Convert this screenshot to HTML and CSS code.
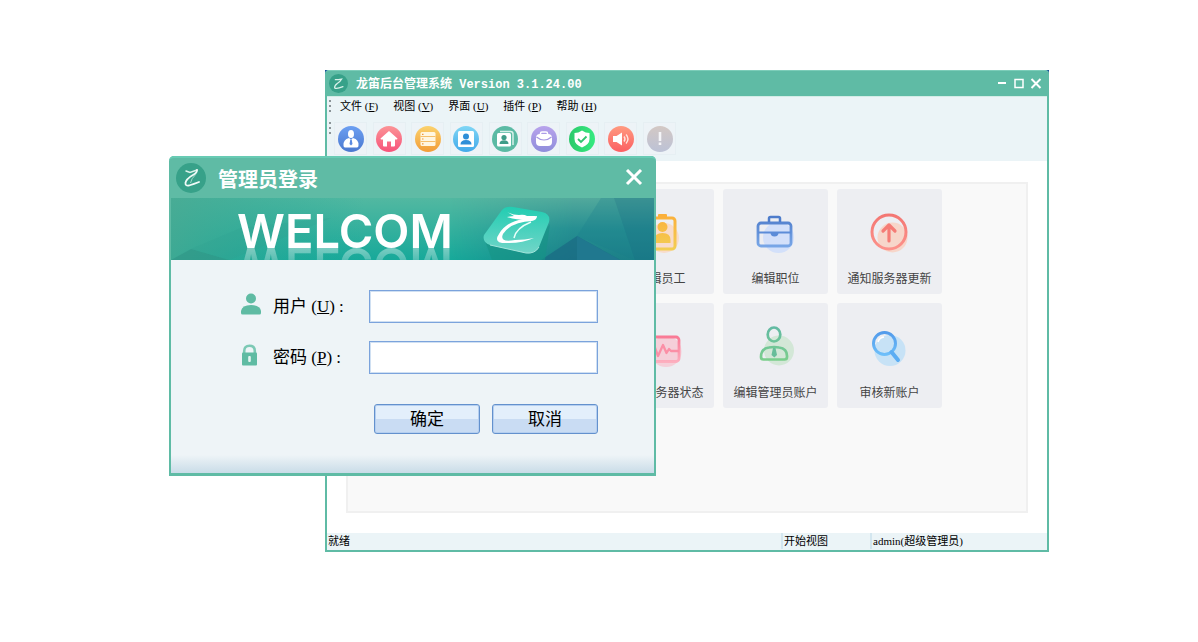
FILE: index.html
```html
<!DOCTYPE html>
<html lang="zh-CN">
<head>
    <meta charset="UTF-8">
    <meta name="viewport" content="width=device-width, initial-scale=1.0">
    <title>龙笛后台管理系统</title>
    <link rel="stylesheet" href="styles.css">
</head>
<body>

<div class="desktop">

    <!-- Main window -->
    <div class="main-window">
        <header class="titlebar">
            <svg class="titlebar-logo" viewBox="0 0 30 30">
                <circle cx="15" cy="15" r="15" fill="#37a189"/>
                <path d="M10 9Q15 9 20 8Q18 12 13 15Q8 19 9 22Q12 24 22 20" fill="none" stroke="#d9f1ea" stroke-width="2" stroke-linecap="round"/>
            </svg>
            <h1>龙笛后台管理系统 Version 3.1.24.00</h1>
            <div class="window-buttons">
                <button type="button" aria-label="最小化"><svg viewBox="0 0 12 12"><path d="M2 5h8" stroke="#fff" stroke-width="2"/></svg></button>
                <button type="button" aria-label="最大化"><svg viewBox="0 0 12 12"><rect x="2" y="1.500" width="8" height="8" fill="none" stroke="#fff" stroke-width="1.500"/></svg></button>
                <button type="button" aria-label="关闭"><svg viewBox="0 0 12 12"><path d="M1.500 1l9 9M10.500 1l-9 9" stroke="#fff" stroke-width="2"/></svg></button>
            </div>
        </header>

        <div class="window-body">
            <div class="bars">
                <nav class="menubar">
                    <span class="grip"></span>
                    <button type="button">文件 (<u>F</u>)</button>
                    <button type="button">视图 (<u>V</u>)</button>
                    <button type="button">界面 (<u>U</u>)</button>
                    <button type="button">插件 (<u>P</u>)</button>
                    <button type="button">帮助 (<u>H</u>)</button>
                </nav>
                <div class="toolbar">
                    <span class="grip"></span>
                    <div class="tools">
                        <button type="button" aria-label="管理员">
                            <svg viewBox="0 0 26 26">
                                <defs><linearGradient id="t1" x2="0" y2="1"><stop stop-color="#6c9ff2"/><stop offset="1" stop-color="#4a78cf"/></linearGradient></defs>
                                <circle cx="13" cy="13" r="13" fill="url(#t1)"/>
                                <ellipse cx="13" cy="8" rx="3" ry="4" fill="#fff"/>
                                <path d="M5.500 19.500Q5 13.500 11 12L13 13.500L15 12Q21 13.500 20.500 19.500Q20.500 21.500 19 21.500H7Q5.500 21.500 5.500 19.500Z" fill="#fff"/>
                                <path d="M12.300 13.500h1.400l.8 4.500-1.500 1.500-1.500-1.500z" fill="#5b8ae0"/>
                            </svg>
                        </button>
                        <button type="button" aria-label="主页">
                            <svg viewBox="0 0 26 26">
                                <defs><linearGradient id="t2" x2="0" y2="1"><stop stop-color="#fb9396"/><stop offset="1" stop-color="#f7537a"/></linearGradient></defs>
                                <circle cx="13" cy="13" r="13" fill="url(#t2)"/>
                                <path d="M13 5L4.500 12.500Q4.500 13.500 5.500 13.500H7V19.500Q7 20.500 8 20.500H11V15.500H15V20.500H18Q19 20.500 19 19.500V13.500H20.500Q21.500 13.500 21.500 12.500Z" fill="#fff"/>
                            </svg>
                        </button>
                        <button type="button" aria-label="列表">
                            <svg viewBox="0 0 26 26">
                                <defs><linearGradient id="t3" x2="0" y2="1"><stop stop-color="#fbd26d"/><stop offset="1" stop-color="#f29c38"/></linearGradient></defs>
                                <circle cx="13" cy="13" r="13" fill="url(#t3)"/>
                                <rect x="5.500" y="6" width="15" height="14" rx="1.500" fill="#fff6e2"/>
                                <path d="M5.500 10.500h15M5.500 15.500h15" stroke="#f5bf6c" stroke-width="1"/>
                                <path d="M7 8.300h1.500M7 13h1.500M7 17.800h1.500" stroke="#f0963a" stroke-width="1.200"/>
                            </svg>
                        </button>
                        <button type="button" aria-label="员工">
                            <svg viewBox="0 0 26 26">
                                <defs><linearGradient id="t4" x2="0" y2="1"><stop stop-color="#7fd6f5"/><stop offset="1" stop-color="#43a9ea"/></linearGradient></defs>
                                <circle cx="13" cy="13" r="13" fill="url(#t4)"/>
                                <rect x="5" y="5" width="16" height="16" rx="1.500" fill="#fff"/>
                                <circle cx="13" cy="10.500" r="3" fill="#2f8fd8"/>
                                <path d="M7.500 18.500Q7.500 14 13 14T18.500 18.500Z" fill="#2f8fd8"/>
                            </svg>
                        </button>
                        <button type="button" aria-label="通讯录">
                            <svg viewBox="0 0 26 26">
                                <circle cx="13" cy="13" r="13" fill="#5bbaa4"/>
                                <path d="M8 5.500H18.500Q21 5.500 21 8V19" fill="none" stroke="#d8f0ea" stroke-width="1.500"/>
                                <rect x="5" y="7" width="14" height="13.500" rx="1.500" fill="#fff"/>
                                <circle cx="12" cy="11.500" r="2.600" fill="#3f9c88"/>
                                <path d="M7.500 18Q7.500 14.300 12 14.300T16.500 18Z" fill="#3f9c88"/>
                            </svg>
                        </button>
                        <button type="button" aria-label="职位">
                            <svg viewBox="0 0 26 26">
                                <defs><linearGradient id="t6" x2="0" y2="1"><stop stop-color="#b8a3ec"/><stop offset="1" stop-color="#8f8ddb"/></linearGradient></defs>
                                <circle cx="13" cy="13" r="13" fill="url(#t6)"/>
                                <path d="M9.500 9V7.500Q9.500 6 11 6H15Q16.500 6 16.500 7.500V9" fill="none" stroke="#fff" stroke-width="1.500"/>
                                <rect x="5" y="8" width="16" height="12" rx="4" fill="#fff"/>
                                <path d="M5.500 11Q9 14 13 14T20.500 11" fill="none" stroke="#a597e2" stroke-width="1.200"/>
                            </svg>
                        </button>
                        <button type="button" aria-label="安全">
                            <svg viewBox="0 0 26 26">
                                <defs><linearGradient id="t7" x2="1" y2="0"><stop stop-color="#2bc96b"/><stop offset="1" stop-color="#36ea80"/></linearGradient></defs>
                                <circle cx="13" cy="13" r="13" fill="url(#t7)"/>
                                <path d="M13 4.500Q16.500 7 20.500 7V13Q20.500 18.500 13 21.500Q5.500 18.500 5.500 13V7Q9.500 7 13 4.500Z" fill="#fff"/>
                                <path d="M9 13l3 3 5.500-5.500" fill="none" stroke="#2fc46f" stroke-width="1.800"/>
                            </svg>
                        </button>
                        <button type="button" aria-label="广播">
                            <svg viewBox="0 0 26 26">
                                <defs><linearGradient id="t8" x2="0" y2="1"><stop stop-color="#ff9a80"/><stop offset="1" stop-color="#fb5f62"/></linearGradient></defs>
                                <circle cx="13" cy="13" r="13" fill="url(#t8)"/>
                                <path d="M5 10H8.500L14 6.500V19.500L8.500 16H5Z" fill="#fff"/>
                                <path d="M16 10.500Q18 13 16 15.500M18 8.500Q22 13 18 17.500" fill="none" stroke="#ffe3dc" stroke-width="1.400"/>
                            </svg>
                        </button>
                        <button type="button" aria-label="提示">
                            <svg viewBox="0 0 26 26">
                                <defs><linearGradient id="t9" x2="0" y2="1"><stop stop-color="#d3c8c4"/><stop offset="1" stop-color="#bcc2d6"/></linearGradient></defs>
                                <circle cx="13" cy="13" r="13" fill="url(#t9)"/>
                                <path d="M13 6v9M13 16.500v2.500" stroke="#f5f5f8" stroke-width="2.600"/>
                            </svg>
                        </button>
                    </div>
                </div>
            </div>

            <main class="workspace">
                <div class="panel">
                    <button type="button" class="tile tile-lead">
                        <svg viewBox="0 0 48 48">
                            <defs><linearGradient id="g1" gradientUnits="userSpaceOnUse" x1="0" y1="6" x2="0" y2="42"><stop stop-color="#fbb03b"/><stop offset="1" stop-color="#f2cf55"/></linearGradient></defs>
                            <circle cx="26" cy="29" r="15" fill="#f8dccb"/>
                            <rect x="12" y="9" width="25" height="31" rx="3" fill="none" stroke="url(#g1)" stroke-width="3"/>
                            <rect x="20" y="5" width="9" height="4" rx="1" fill="#fbb03b"/>
                            <circle cx="24.500" cy="18" r="5" fill="url(#g1)"/>
                            <path d="M16.500 34V31Q16.500 24 24.500 24T32.500 31V34Z" fill="url(#g1)"/>
                        </svg>
                        <span>编辑员工</span>
                    </button>
                    <button type="button" class="tile">
                        <svg viewBox="0 0 48 48">
                            <defs><linearGradient id="g2" gradientUnits="userSpaceOnUse" x1="0" y1="7" x2="0" y2="39"><stop stop-color="#4e7ccb"/><stop offset="1" stop-color="#7aa8e8"/></linearGradient></defs>
                            <circle cx="26.500" cy="28.500" r="15.500" fill="#d3e0fa"/>
                            <rect x="6" y="14" width="33" height="23" rx="3" fill="none" stroke="url(#g2)" stroke-width="2.800"/>
                            <path d="M17 13V9.500Q17 8 18.500 8H26.500Q28 8 28 9.500V13" fill="none" stroke="#4e7ccb" stroke-width="2.500"/>
                            <path d="M6 23.500H39" stroke="#5c8cd8" stroke-width="2"/>
                            <path d="M18.500 23.500h8a4 4 0 0 1-8 0z" fill="#5c8cd8"/>
                        </svg>
                        <span>编辑职位</span>
                    </button>
                    <button type="button" class="tile">
                        <svg viewBox="0 0 48 48">
                            <defs><linearGradient id="g3" gradientUnits="userSpaceOnUse" x1="0" y1="5" x2="0" y2="41"><stop stop-color="#f37672"/><stop offset="1" stop-color="#fd938c"/></linearGradient></defs>
                            <circle cx="26.500" cy="28.500" r="15" fill="#f7d6ca"/>
                            <circle cx="23" cy="23" r="17" fill="none" stroke="url(#g3)" stroke-width="3"/>
                            <path d="M23 32V16M17 22l6-6 6 6" fill="none" stroke="#f57c76" stroke-width="3.200" stroke-linecap="round" stroke-linejoin="round"/>
                        </svg>
                        <span>通知服务器更新</span>
                    </button>
                    <button type="button" class="tile tile-lead">
                        <svg viewBox="0 0 48 48">
                            <defs><linearGradient id="g4" gradientUnits="userSpaceOnUse" x1="0" y1="12" x2="0" y2="40"><stop stop-color="#f97793"/><stop offset="1" stop-color="#fdb0c0"/></linearGradient></defs>
                            <circle cx="28" cy="28.500" r="15.500" fill="#f5cfd9"/>
                            <rect x="6" y="14" width="35" height="24.500" rx="3" fill="none" stroke="url(#g4)" stroke-width="2.800"/>
                            <path d="M7 27H13L16 22L20 33L25 22L28.500 30L31 26L33 28H41" fill="none" stroke="#fb8fa6" stroke-width="2.300" stroke-linejoin="round"/>
                        </svg>
                        <span>查看服务器状态</span>
                    </button>
                    <button type="button" class="tile">
                        <svg viewBox="0 0 48 48">
                            <defs><linearGradient id="g5" gradientUnits="userSpaceOnUse" x1="0" y1="4" x2="0" y2="38"><stop stop-color="#62baa3"/><stop offset="1" stop-color="#7ccf8c"/></linearGradient></defs>
                            <circle cx="27" cy="27.500" r="15" fill="#d3e7d7"/>
                            <ellipse cx="22" cy="11.500" rx="6.300" ry="7" fill="none" stroke="url(#g5)" stroke-width="2.700"/>
                            <path d="M9 34Q9 25.500 17 24.500Q22 23.500 27 24.500Q35.500 25.500 35 34Q35 36.500 32.500 36.500H11.500Q9 36.500 9 34Z" fill="none" stroke="url(#g5)" stroke-width="2.700"/>
                            <path d="M21 25h2.500l1.500 7-2.700 2.500-2.800-2.500z" fill="#67bd99"/>
                        </svg>
                        <span>编辑管理员账户</span>
                    </button>
                    <button type="button" class="tile">
                        <svg viewBox="0 0 48 48">
                            <defs><linearGradient id="g6" gradientUnits="userSpaceOnUse" x1="0" y1="8" x2="0" y2="34"><stop stop-color="#5199ea"/><stop offset="1" stop-color="#70c2fb"/></linearGradient></defs>
                            <circle cx="24" cy="27.500" r="15.500" fill="#c7e2f6"/>
                            <circle cx="18.500" cy="20.500" r="11" fill="none" stroke="url(#g6)" stroke-width="3"/>
                            <path d="M12 19Q13.500 14.500 18 14" fill="none" stroke="#fff" stroke-width="1.500"/>
                            <path d="M25.500 29L32 37" stroke="#5cadf3" stroke-width="4" stroke-linecap="round"/>
                        </svg>
                        <span>审核新账户</span>
                    </button>
                </div>
            </main>

            <footer class="statusbar">
                <span>就绪</span>
                <span class="status-cell">开始视图</span>
                <span class="status-cell">admin(超级管理员)</span>
            </footer>
        </div>
    </div>

    <!-- Login dialog -->
    <form class="login" role="dialog" aria-labelledby="loginTitle">
        <header class="login-title">
            <svg class="login-logo" viewBox="0 0 30 30">
                <circle cx="15" cy="15" r="15" fill="#37a189"/>
                <path d="M10 8L14 9.500L21 7" fill="none" stroke="#d9f1ea" stroke-width="1.500" stroke-linecap="round"/>
                <path d="M21 7Q21 10 17 12Q10 16 9.500 20Q9 23 13 22.500Q18 21 23 19" fill="none" stroke="#f0faf7" stroke-width="1.800" stroke-linecap="round"/>
                <path d="M20 11Q15 16 14.500 20" fill="none" stroke="#9ed4c6" stroke-width="1"/>
            </svg>
            <h2 id="loginTitle">管理员登录</h2>
            <button type="button" aria-label="关闭"><svg viewBox="0 0 18 18"><path d="M2 1l14 14M16 1l-14 14" stroke="#fff" stroke-width="3"/></svg></button>
        </header>

        <div class="banner">
            <svg class="banner-art" viewBox="0 0 483 62" preserveAspectRatio="none">
                <defs>
                    <linearGradient id="b1" x2="0" y2="1"><stop stop-color="#52b8a1"/><stop offset="1" stop-color="#17a99a"/></linearGradient>
                    <linearGradient id="b2" x2="1" y2="0"><stop stop-color="#46a992" stop-opacity=".8"/><stop offset=".4" stop-color="#20a898" stop-opacity="0"/></linearGradient>
                    <linearGradient id="b3" x2="0" y2="1"><stop stop-color="#52a99c"/><stop offset=".5" stop-color="#268f92"/><stop offset="1" stop-color="#1b8088"/></linearGradient>
                    <linearGradient id="b4" x2="1" y2="0"><stop stop-color="#000"/><stop offset=".6" stop-color="#fff"/></linearGradient>
                    <linearGradient id="b5" x2="0" y2="1"><stop stop-color="#22cdb2"/><stop offset="1" stop-color="#71d5c8"/></linearGradient>
                    <mask id="fade"><rect x="280" width="203" height="62" fill="url(#b4)"/></mask>
                </defs>
                <rect width="483" height="62" fill="url(#b1)"/>
                <rect width="483" height="62" fill="url(#b2)"/>
                <path d="M0 62L20 51L58 62Z" fill="#2f9486" opacity=".6"/>
                <path d="M20 51L70 30L160 20L58 62Z" fill="#2f9f8f" opacity=".25"/>
                <rect x="280" width="203" height="62" fill="url(#b3)" mask="url(#fade)"/>
                <path d="M406 38L430 0H443L464 62Z" fill="#177a8a" opacity=".25"/>
                <path d="M443 0H483V62H464Z" fill="#176f85" opacity=".4"/>
                <path d="M370 62L406 38L449 62Z" fill="#1b6b84" opacity=".75"/>
                <path d="M406 38V62H449Z" fill="#20788f"/>
                <path d="M313 40L321 62H374L379 26L356 55Z" fill="#159586" opacity=".6"/>
                <path d="M331 12Q335 8 342 9L371 14Q380 16 378 24L368 49Q364 56 355 55L319 47Q311 44 313 37Z" fill="url(#b5)"/>
                <path d="M368 49Q364 56 355 55L319 47" fill="none" stroke="#a3e5db" stroke-width="1"/>
                <path d="M336 14Q342 17 348 17Q353 16 356 18L366 18L357 22Q344 22 336 19L343 18Z" fill="#fff"/>
                <path d="M366 18Q366 22 361 23Q340 24 332 36Q328 45 344 42Q354 42 363 40Q352 45 338 45Q321 46 328 36Q335 24 352 21Z" fill="#fff"/>
                <path d="M360 24Q345 30 343 40" fill="none" stroke="#e9fffa" stroke-width="1.500"/>
            </svg>
            <strong class="banner-text">WELCOM</strong>
        </div>

        <div class="login-body">
            <div class="field">
                <svg viewBox="0 0 20 22"><circle cx="10" cy="5.500" r="5" fill="#5fbba3"/><path d="M0 20V18Q1 12 10 12T20 18V20Q20 21.500 18.500 21.500H1.500Q0 21.500 0 20Z" fill="#5fbba3"/></svg>
                <label for="user">用户 (<u>U</u>) :</label>
                <input id="user" type="text">
            </div>
            <div class="field">
                <svg viewBox="0 0 20 22"><path d="M3.200 10V7Q3.200 1.800 8.500 1.800T13.800 7V10" fill="none" stroke="#7cc9b5" stroke-width="2.600"/><rect x="1" y="8.500" width="15" height="13" rx="1" fill="#5fbba3"/><rect x="7.200" y="12" width="2.600" height="6" rx="1" fill="#e4f4f0"/></svg>
                <label for="password">密码 (<u>P</u>) :</label>
                <input id="password" type="password">
            </div>
            <div class="actions">
                <button type="button">确定</button>
                <button type="button">取消</button>
            </div>
        </div>
    </form>

</div>

</body>
</html>
```
FILE: styles.css
```css
* {
    box-sizing: border-box;
}
body {
    margin: 0;
    background-color: #fff;
    font-family: "Liberation Serif", "Noto Sans CJK SC", sans-serif;
    font-size: 11px;
    color: #000;
}
button {
    padding: 0;
    border: 0;
    background: none;
    font: inherit;
    color: inherit;
}
svg {
    display: block;
}
.desktop {
    position: relative;
    min-height: 100vh;
}

/* Main window */
.main-window {
    position: absolute;
    top: 70px;
    left: 325px;
    right: 149px;
    background-color: #154f9a;
}
.titlebar {
    display: flex;
    align-items: center;
    height: 26px;
    padding: 0 7px 0 4px;
    border-top: 1px solid #7ccdb9;
    border-radius: 4px 4px 0 0;
    background-color: #5fbba5;
    color: #fff;
}
.titlebar-logo {
    width: 19px;
    height: 19px;
}
.titlebar h1 {
    flex: 1;
    margin: 0 0 0 8px;
    padding-top: 3px;
    font-family: "Liberation Mono", "Noto Sans CJK SC", monospace;
    font-size: 12px;
    line-height: 20px;
}
.window-buttons {
    display: flex;
    gap: 5px;
}
.window-buttons svg {
    width: 12px;
    height: 12px;
}
.window-body {
    border: 2px solid #5fbba5;
    border-top: 0;
    background-color: #fff;
}
.bars {
    padding-bottom: 6px;
    border-top: 1px solid #d3ece6;
    background-color: #ebf4f7;
}
.menubar {
    display: flex;
    align-items: center;
    gap: 15px;
    height: 20px;
    padding-left: 2px;
}
.menubar button {
    padding-bottom: 2px;
    line-height: 16px;
}
.menubar .grip {
    margin-right: -6px;
}
.grip {
    width: 2px;
    height: 14px;
    background-image: linear-gradient(#8b9498 2px, transparent 2px);
    background-size: 2px 5px;
}
.toolbar {
    display: flex;
    gap: 3px;
    margin-top: 5px;
    padding-left: 2px;
}
.tools {
    display: flex;
    justify-content: space-between;
    width: 342px;
}
.tools button {
    display: grid;
    place-items: center;
    width: 33px;
    height: 33px;
    border: 1px solid #e6eff3;
    background-color: #edf3f7;
}
.tools svg {
    width: 26px;
    height: 26px;
}
.workspace {
    padding: 21px 19px 20px;
}
.panel {
    display: grid;
    grid-template-columns: repeat(5, 105px);
    grid-auto-rows: 105px;
    gap: 9px;
    min-height: 331px;
    padding: 5px 33px;
    border: 2px solid #f0f0f0;
    background-color: #f9f9f9;
}
.tile {
    display: flex;
    flex-direction: column;
    align-items: center;
    gap: 12px;
    padding-top: 20px;
    border-radius: 3px;
    background-color: #edeef2;
    font-family: "Noto Sans CJK SC", sans-serif;
    font-size: 12px;
    line-height: 18px;
    color: #444;
}
.tile-lead {
    grid-column: 3;
}
.tile svg {
    width: 48px;
    height: 48px;
}
.statusbar {
    display: grid;
    grid-template-columns: 1fr 89px 177px;
    padding: 0 0 1px 1px;
    background-color: #ebf4f7;
    line-height: 16px;
}
.status-cell {
    padding-left: 1px;
    border-left: 2px solid #d3e6ef;
}

/* Login dialog */
.login {
    position: absolute;
    top: 156px;
    left: 169px;
    width: 487px;
    border: 2px solid #5fbba5;
    border-width: 0 2px 3px;
    border-radius: 5px 5px 0 0;
    background-color: #5fbba5;
    font-size: 17px;
}
.login-title {
    display: flex;
    align-items: center;
    height: 42px;
    margin: 0 -2px;
    padding: 0 13px 0 7px;
    border-top: 2px solid #68cbb4;
    border-radius: 5px 5px 0 0;
    color: #fff;
}
.login-logo {
    width: 30px;
    height: 30px;
}
.login-title h2 {
    flex: 1;
    margin: 0 0 0 12px;
    padding-top: 3px;
    font-size: 20px;
    line-height: 28px;
}
.login-title button svg {
    width: 18px;
    height: 18px;
}
.banner {
    position: relative;
    height: 62px;
    padding: 16px 0 0 66px;
    overflow: hidden;
}
.banner-art {
    position: absolute;
    inset: 0;
    width: 100%;
    height: 100%;
}
.banner-text {
    position: relative;
    display: block;
    width: max-content;
    height: 34px;
    font-family: Inter, "Liberation Sans", sans-serif;
    font-size: 47px;
    font-weight: 600;
    line-height: 34px;
    color: #fff;
    -webkit-box-reflect: below 0 linear-gradient(transparent, rgba(255, 255, 255, 0.4));
}
.login-body {
    display: flex;
    flex-direction: column;
    gap: 18px;
    padding: 30px 56px 39px 70px;
    background: linear-gradient(#eef4f7, #c9dce8) bottom / 100% 18px no-repeat #eef4f7;
}
.field {
    display: grid;
    grid-template-columns: 20px 84px 1fr;
    align-items: center;
    gap: 12px;
}
.field svg {
    width: 20px;
    height: 22px;
    margin-bottom: 5px;
}
.field label {
    padding-bottom: 4px;
    white-space: nowrap;
}
.field input {
    width: 100%;
    height: 33px;
    padding: 0 8px;
    border: 1px solid #7ba3dc;
    outline: 1px solid #d0e0f2;
    outline-offset: -2px;
    background-color: #fff;
    font: inherit;
}
.actions {
    display: flex;
    justify-content: flex-end;
    gap: 12px;
    margin-top: 12px;
}
.actions button {
    width: 106px;
    height: 30px;
    padding-bottom: 3px;
    border: 1px solid #6391cd;
    border-radius: 3px;
    box-shadow: inset 0 0 0 1px #b5cff0;
    background: linear-gradient(#e3effb 50%, #c9dcf3 50%);
}
```
